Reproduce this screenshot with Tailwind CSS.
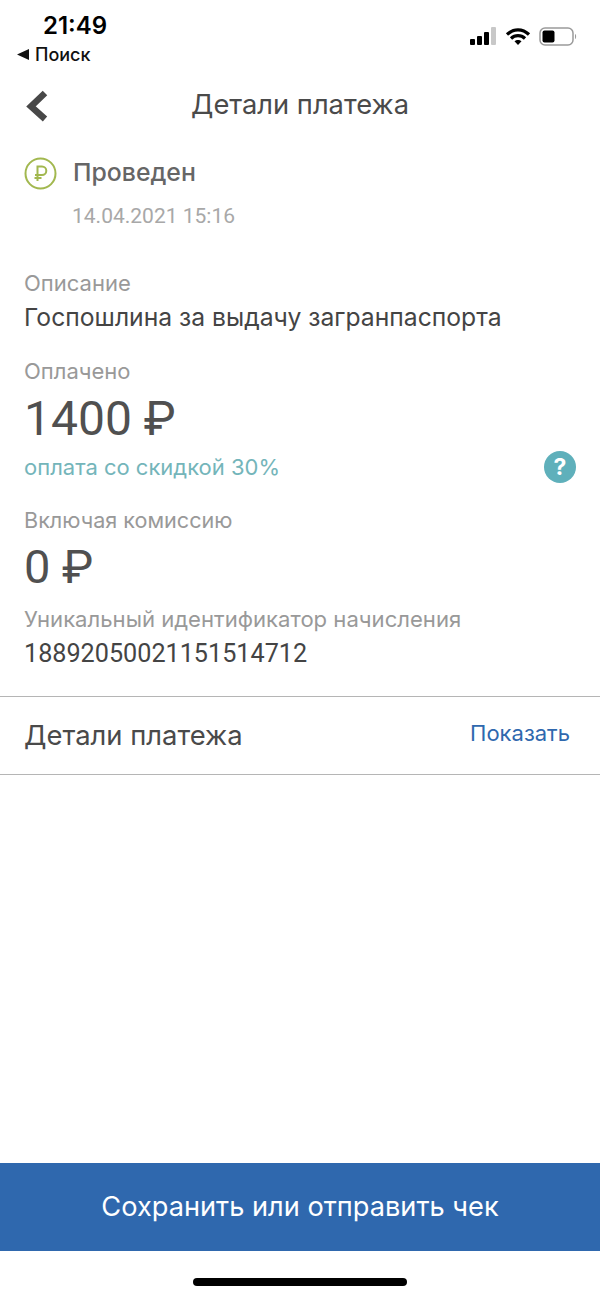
<!doctype html>
<html lang="ru">
    <head>
        <meta charset="UTF-8" />
        <title>Детали платежа</title>
        <script src="https://cdn.jsdelivr.net/npm/@tailwindcss/browser@4"></script>
    </head>
    <body class="bg-white font-['Inter',sans-serif]">
        <div class="w-[600px] h-[1298px] flex flex-col overflow-hidden">
            <!-- Status bar -->
            <div class="h-[72px] shrink-0 flex justify-between">
                <div class="pl-[17px]">
                    <div class="pl-[26px] pt-[11px] h-[42px] text-[24px] leading-[29px] font-semibold text-black">21:49</div>
                    <div class="flex items-center gap-[6px] h-[24px] text-[18px] font-medium text-[#111]">
                        <svg width="12" height="11" viewBox="0 0 12 11"><path d="M0 5.5 12 0v11z" fill="#111" /></svg>
                        <span>Поиск</span>
                    </div>
                </div>
                <div class="flex items-start gap-[8px] pt-[27px] pr-[23px]">
                    <svg width="28" height="19" viewBox="0 0 28 19">
                        <rect x="1" y="12" width="5" height="6" rx="1" fill="#000" />
                        <rect x="8" y="9" width="5" height="9" rx="1" fill="#000" />
                        <rect x="15" y="5" width="5" height="13" rx="1" fill="#000" />
                        <rect x="22" y="0" width="5" height="18" rx="1" fill="#c8c8c8" />
                    </svg>
                    <svg width="26" height="19" viewBox="0 0 26 19">
                        <path d="M2 7.5C8.5 1.2 17.5 1.2 24 7.5M6 11.5c4-3.8 10-3.8 14 0" fill="none" stroke="#000" stroke-width="3.2" />
                        <path d="M9.5 14.3c2-1.9 5-1.9 7 0L13 18z" fill="#000" />
                    </svg>
                    <svg width="38" height="20" viewBox="0 0 38 20">
                        <rect x="1" y="1" width="33" height="17" rx="5" fill="none" stroke="#9a9a9a" stroke-width="1.5" />
                        <rect x="3.500" y="3.500" width="12" height="12" rx="2" fill="#000" />
                        <path d="M36 7c1.500.5 1.500 4.500 0 5z" fill="#9a9a9a" />
                    </svg>
                </div>
            </div>

            <!-- Nav -->
            <div class="relative h-[66px] shrink-0 flex items-center justify-center text-[27.3px] text-[#4a4a4a]">
                <svg class="absolute left-[25px] top-[18px]" width="24" height="32" viewBox="0 0 24 32">
                    <path d="M20 3 6 16.500 20 29" fill="none" stroke="#484848" stroke-width="6.500" />
                </svg>
                <span>Детали платежа</span>
            </div>

            <!-- Status -->
            <div class="flex items-center gap-[16px] pl-[24px] mt-[17px] h-[36px]">
                <svg width="33" height="33" viewBox="0 0 33 33">
                    <circle cx="16.500" cy="16.500" r="15" fill="none" stroke="#a2b84f" stroke-width="2" />
                    <path d="M13.500 24V9.500h4.500a4.300 4.300 0 0 1 0 8.600h-7M10.500 21h7" fill="none" stroke="#a2b84f" stroke-width="2" />
                </svg>
                <span class="text-[24.8px] font-medium text-[#666]">Проведен</span>
            </div>
            <div class="pl-[72px] mt-[9px] text-[21px] leading-[32px] text-[#a8a8a8] font-['Roboto',sans-serif]">14.04.2021 15:16</div>

            <!-- Details -->
            <div class="px-[24px] mt-[36px]">
                <div class="text-[22px] leading-[30px] pb-[2px] text-[#999]">Описание</div>
                <div class="text-[24.7px] leading-[34px] text-[#444]">Госпошлина за выдачу загранпаспорта</div>
                <div class="mt-[22px] text-[22px] leading-[30px] pb-[2px] text-[#999]">Оплачено</div>
                <div class="text-[48px] leading-[62px] text-[#505050] font-['Roboto',sans-serif]">1400 ₽</div>
                <div class="flex items-center justify-between h-[34px]">
                    <span class="text-[22px] text-[#74b5ba]">оплата со скидкой 30%</span>
                    <span class="w-[32px] h-[32px] rounded-full bg-[#5fb0bb] flex items-center justify-center text-[23px] font-bold text-white">?</span>
                </div>
                <div class="mt-[20px] text-[21.6px] leading-[32px] pb-[2px] text-[#999]">Включая комиссию</div>
                <div class="text-[47px] leading-[58px] text-[#505050] font-['Roboto',sans-serif]">0 ₽</div>
                <div class="mt-[9px] text-[22.1px] leading-[28px] pb-[4px] text-[#999]">Уникальный идентификатор начисления</div>
                <div class="text-[25.2px] leading-[34px] text-[#444] font-['Roboto',sans-serif]">18892050021151514712</div>
            </div>

            <!-- Payment details row -->
            <div class="mt-[25px] h-[79px] shrink-0 border-y border-[#b5b5b5] flex items-center justify-between pl-[24px] pr-[30px]">
                <span class="text-[27.4px] text-[#4a4a4a]">Детали платежа</span>
                <span class="text-[22px] text-[#2f68ae] mb-[4px]">Показать</span>
            </div>

            <div class="flex-1"></div>

            <!-- Bottom button -->
            <div class="h-[88px] shrink-0 bg-[#2f68ae] flex items-center justify-center text-[27.2px] text-white">Сохранить или отправить чек</div>
            <div class="h-[47px] shrink-0 flex justify-center pt-[27px]">
                <div class="w-[214px] h-[8px] rounded-full bg-black"></div>
            </div>
        </div>
    </body>
</html>
